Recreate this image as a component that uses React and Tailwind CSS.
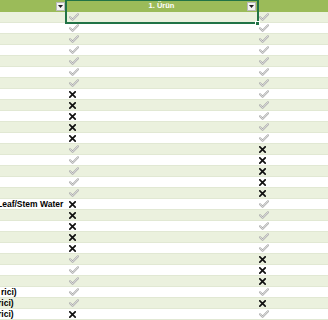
import React from 'react';

// y = check, n = cross
const ROWS = [
  { t: '', a: 'y', b: 'y' },
  { t: '', a: 'y', b: 'y' },
  { t: '', a: 'y', b: 'y' },
  { t: '', a: 'y', b: 'y' },
  { t: '', a: 'y', b: 'y' },
  { t: '', a: 'y', b: 'y' },
  { t: '', a: 'y', b: 'y' },
  { t: '', a: 'n', b: 'y' },
  { t: '', a: 'n', b: 'y' },
  { t: '', a: 'n', b: 'y' },
  { t: '', a: 'n', b: 'y' },
  { t: '', a: 'n', b: 'y' },
  { t: '', a: 'y', b: 'n' },
  { t: '', a: 'y', b: 'n' },
  { t: '', a: 'y', b: 'n' },
  { t: '', a: 'y', b: 'n' },
  { t: '', a: 'y', b: 'n' },
  { t: 'Leaf/Stem Water', a: 'n', b: 'y', ml: '-ml-[3px]' },
  { t: '', a: 'n', b: 'y' },
  { t: '', a: 'n', b: 'y' },
  { t: '', a: 'n', b: 'y' },
  { t: '', a: 'n', b: 'y' },
  { t: '', a: 'y', b: 'n' },
  { t: '', a: 'y', b: 'n' },
  { t: '', a: 'y', b: 'n' },
  { t: 'rici)', a: 'y', b: 'y', ml: 'ml-[1px]' },
  { t: 'rici)', a: 'y', b: 'n', ml: '-ml-[2px]' },
  { t: 'rici)', a: 'n', b: 'y', ml: '-ml-[2px]' },
];

function Check() {
  return (
    <svg width="10" height="8" viewBox="0 0 10 8" className="block">
      <path d="M1 4.2 L3.6 6.8 L9 1.2" fill="none" stroke="#a8a8a8" strokeWidth="2" strokeLinecap="round" strokeLinejoin="round" />
      <path d="M1 4.2 L3.6 6.8 L9 1.2" fill="none" stroke="#f6f6f6" strokeWidth="0.8" strokeLinecap="round" strokeLinejoin="round" />
    </svg>
  );
}

function Cross() {
  return (
    <svg width="7" height="7" viewBox="0 0 7 7" className="block">
      <path d="M0.8 0.8 L6.2 6.2 M6.2 0.8 L0.8 6.2" stroke="#111" strokeWidth="1.7" strokeLinecap="square" />
    </svg>
  );
}

function Mark({ v }) {
  return v === 'y' ? <Check /> : <Cross />;
}

function FilterBtn() {
  return (
    <div className="w-[9px] h-[9px] bg-[#f3f3f3] border border-[#b9b9b9] flex items-center justify-center">
      <svg width="5" height="3" viewBox="0 0 5 3" className="block">
        <path d="M0 0 L5 0 L2.5 3 Z" fill="#222" />
      </svg>
    </div>
  );
}

export default function App() {
  return (
    <div className="relative w-[328px] h-[320px] overflow-hidden bg-white font-['Liberation_Sans',Arial,sans-serif]">
      {/* header */}
      <div className="grid grid-cols-[66px_191px_71px] h-[12px] bg-[#9bbb59]">
        <div className="flex items-center justify-end pr-[1px]">
          <FilterBtn />
        </div>
        <div className="relative flex items-center justify-center">
          <span className="text-white font-bold text-[7.5px] leading-none">1. Ürün</span>
          <div className="absolute right-[1px] top-[2px]">
            <FilterBtn />
          </div>
        </div>
        <div />
      </div>

      {/* rows */}
      {ROWS.map((r, i) => (
        <div
          key={i}
          className={`grid grid-cols-[66px_191px_71px] h-[11px] border-b border-[#e1e8d3] ${i % 2 === 0 ? 'bg-[#ebf1de]' : 'bg-white'}`}
        >
          <div className="overflow-hidden whitespace-nowrap">
            <div className={`${r.ml || ''} text-[8.5px] leading-[11px] font-bold text-black`}>{r.t}</div>
          </div>
          <div className="flex items-center pl-[3px]">
            <Mark v={r.a} />
          </div>
          <div className="flex items-center pl-[2px]">
            <Mark v={r.b} />
          </div>
        </div>
      ))}

      {/* selection */}
      <div className="absolute left-[65px] top-[-1px] w-[194px] h-[25px] border-2 border-[#217346] pointer-events-none" />
      <div className="absolute left-[255px] top-[21px] w-[5px] h-[5px] bg-[#217346] border border-white" />
    </div>
  );
}
